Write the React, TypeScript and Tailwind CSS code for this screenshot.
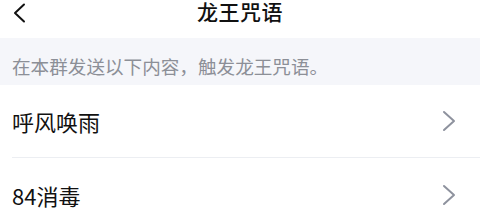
import React from "react";

export default function App() {
  const font = { fontFamily: '"Noto Sans CJK SC", "Noto Sans", sans-serif' };
  return (
    <div className="w-[480px] h-[216px] overflow-hidden bg-white" style={font}>
      <div className="relative h-[38px] flex justify-center pt-[1px]">
        <svg className="absolute left-[12px] top-[3px]" width="16" height="20" viewBox="0 0 16 20">
          <polyline points="12,1.5 3,10 12,18.5" fill="none" stroke="#111" strokeWidth="2" strokeLinecap="round" strokeLinejoin="round" />
        </svg>
        <div className="text-[21px] leading-[21px] font-medium text-[#111] tracking-[0.5px]">龙王咒语</div>
      </div>
      <div className="h-[47px] bg-[#f5f6fa] flex items-center pl-[12px] pt-[9px]">
        <span className="text-[18.6px] leading-[20px] text-[#8c8f97]">在本群发送以下内容，触发龙王咒语。</span>
      </div>
      <div className="pl-[12px]">
        <div className="h-[73px] flex items-center justify-between pr-[24px] border-b border-[#eceef2]">
          <span className="text-[22px] leading-[24px] text-[#111]">呼风唤雨</span>
          <svg width="14" height="22" viewBox="0 0 14 22">
            <polyline points="2,2 12,11 2,20" fill="none" stroke="#8e929e" strokeWidth="2" strokeLinecap="round" strokeLinejoin="round" />
          </svg>
        </div>
        <div className="h-[73px] flex items-center justify-between pr-[24px]">
          <span className="text-[22px] leading-[24px] text-[#111]">84消毒</span>
          <svg width="14" height="22" viewBox="0 0 14 22">
            <polyline points="2,2 12,11 2,20" fill="none" stroke="#8e929e" strokeWidth="2" strokeLinecap="round" strokeLinejoin="round" />
          </svg>
        </div>
      </div>
    </div>
  );
}
